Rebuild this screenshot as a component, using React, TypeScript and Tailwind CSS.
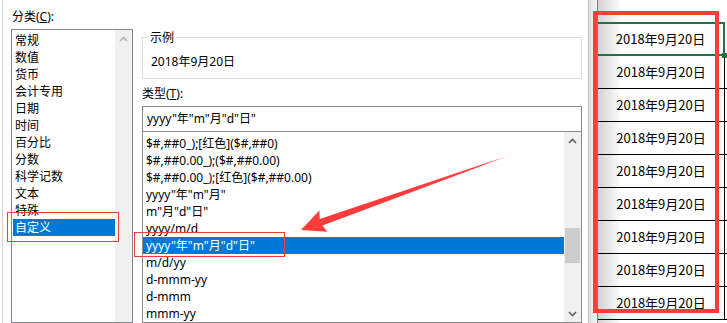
import React from "react";

const categories = ["常规", "数值", "货币", "会计专用", "日期", "时间", "百分比", "分数", "科学记数", "文本", "特殊", "自定义"];

const formats = [
  "$#,##0_);[红色]($#,##0)",
  "$#,##0.00_);($#,##0.00)",
  "$#,##0.00_);[红色]($#,##0.00)",
  'yyyy"年"m"月"',
  'm"月"d"日"',
  "yyyy/m/d",
  'yyyy"年"m"月"d"日"',
  "m/d/yy",
  "d-mmm-yy",
  "d-mmm",
  "mmm-yy",
];

function Chevron({ up, light }: { up?: boolean; light?: boolean }) {
  return (
    <svg width="9" height="6" viewBox="0 0 9 6">
      <path
        d={up ? "M1 5 L4.5 1.5 L8 5" : "M1 1 L4.5 4.5 L8 1"}
        fill="none"
        stroke={light ? "#b4b4b4" : "#606060"}
        strokeWidth="1.6"
      />
    </svg>
  );
}

const DATE = "2018年9月20日";

export default function App() {
  return (
    <div className="relative flex w-[727px] h-[323px] overflow-hidden bg-white text-[12px] text-black font-['Noto_Sans','Noto_Sans_CJK_SC',sans-serif]">
      {/* dialog */}
      <div className="flex w-[589px] shrink-0 border-r border-[#bdbdbd]">
        <div className="ml-[2px] flex flex-1 border-l border-[#d4d4d4]">
          {/* categories */}
          <div className="ml-[8px] flex w-[122px] flex-col pt-[8px]">
            <div className="h-[17px] leading-[17px] pl-[1px]">
              分类(<span className="underline">C</span>):
            </div>
            <div className="mt-[4px] flex h-[300px] border border-[#828790]">
              <div className="flex-1 pl-[1px] pt-[2px]">
                {categories.map((c, i) => (
                  <div
                    key={c}
                    className={
                      "h-[17px] leading-[17px] pl-[2px] " +
                      (i === categories.length - 1 ? "bg-[#0078d7] text-white" : "")
                    }
                  >
                    {c}
                  </div>
                ))}
              </div>
              <div className="flex w-[17px] flex-col items-center bg-[#f0f0f0] pt-[6px]">
                <Chevron up light />
              </div>
            </div>
          </div>

          {/* right side */}
          <div className="ml-[9px] flex w-[440px] flex-col pt-[29px]">
            <fieldset className="h-[50px] border border-[#dcdcdc] px-[8px]">
              <legend className="ml-[-3px] px-[2px] leading-[17px]">示例</legend>
              <div className="mt-[7px] h-[17px] leading-[17px]">{DATE}</div>
            </fieldset>
            <div className="mt-[6px] h-[17px] leading-[17px]">
              类型(<span className="underline">T</span>):
            </div>
            <div className="mt-[4px] h-[25px] border border-b-0 border-[#8a8a8a] pl-[4px] leading-[24px]">
              yyyy"年"m"月"d"日"
            </div>
            <div className="flex h-[192px] border border-[#8a8a8a]">
              <div className="flex-1 pt-[3px]">
                {formats.map((f, i) => (
                  <div
                    key={f}
                    className={
                      "h-[17px] leading-[17px] pl-[3px] whitespace-nowrap " +
                      (i === 6 ? "bg-[#0078d7] text-white" : "")
                    }
                  >
                    {f}
                  </div>
                ))}
              </div>
              <div className="flex w-[17px] flex-col bg-[#f0f0f0]">
                <div className="flex h-[17px] items-center justify-center">
                  <Chevron up />
                </div>
                <div className="flex-1">
                  <div className="mx-auto mt-[79px] h-[35px] w-[15px] bg-[#cdcdcd]" />
                </div>
                <div className="flex h-[17px] items-center justify-center">
                  <Chevron />
                </div>
              </div>
            </div>
          </div>
        </div>
      </div>

      {/* spreadsheet */}
      <div className="flex flex-1">
        <div className="w-[8px] bg-[linear-gradient(to_right,#e2e2e2,#f3f3f3)]" />
        <div className="flex w-[128px] flex-col border-l border-[#4a86c8] bg-[linear-gradient(to_right,#d2d2d2,#ffffff_24px)] font-['Noto_Sans_CJK_SC',sans-serif] text-[13px]">
          <div className="h-[22px] overflow-hidden text-center font-bold text-[#1f3fff]">
            <div className="-mt-[16px] leading-[17px]">{DATE}</div>
          </div>
          <div className="relative flex h-[34px] items-center justify-center border-y-2 border-r-2 border-[#217346]">
            {DATE}
            <div className="absolute right-[-4px] bottom-[-4px] h-[5px] w-[5px] bg-[#217346]" />
          </div>
          {Array.from({ length: 8 }).map((_, i) => (
            <div
              key={i}
              className="flex h-[33px] shrink-0 items-center justify-center border-b border-r border-black"
            >
              {DATE}
            </div>
          ))}
        </div>
        <div className="flex flex-1 flex-col pt-[56px]">
          {Array.from({ length: 8 }).map((_, i) => (
            <div key={i} className="h-[33px] shrink-0 border-b border-black" />
          ))}
        </div>
      </div>

      {/* annotations */}
      <div className="pointer-events-none absolute left-[7px] top-[212px] h-[30px] w-[112px] border border-[#ef3b3b]" />
      <div className="pointer-events-none absolute left-[134px] top-[232px] h-[25px] w-[151px] border border-[#ef3b3b]" />
      <div className="pointer-events-none absolute left-[593px] top-[11px] h-[302px] w-[126px] border-4 border-[#ff3b3b]" />
      <svg className="pointer-events-none absolute left-0 top-0" width="727" height="323" viewBox="0 0 727 323">
        <defs>
          <linearGradient id="tail" x1="513" y1="154" x2="300" y2="230" gradientUnits="userSpaceOnUse">
            <stop offset="0" stopColor="#ff3b3b" stopOpacity="0.1" />
            <stop offset="0.15" stopColor="#ff3b3b" stopOpacity="1" />
            <stop offset="1" stopColor="#ff3b3b" />
          </linearGradient>
        </defs>
        <polygon
          points="513,154 322.5,225.6 327.3,231.8 301,230 319.3,210.5 319.8,219.1"
          fill="url(#tail)"
        />
      </svg>
    </div>
  );
}
